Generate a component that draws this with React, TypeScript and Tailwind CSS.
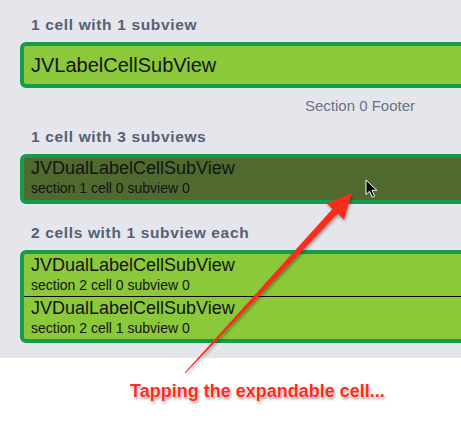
const font = "font-['Liberation_Sans',Arial,sans-serif]";

function SectionHeader({ title, className = "" }: { title: string; className?: string }) {
  return (
    <div className={`pl-[31px] text-[15.5px] leading-[18px] font-bold tracking-[0.65px] text-[#566075] ${className}`}>
      {title}
    </div>
  );
}

function DualRow({ title, sub, className = "" }: { title: string; sub: string; className?: string }) {
  return (
    <div className={`flex h-[42px] flex-col pl-[7px] text-[#141414] ${className}`}>
      <div className="text-[18px] leading-[20px]">{title}</div>
      <div className="mt-[2px] text-[14px] leading-[16px]">{sub}</div>
    </div>
  );
}

function Cursor() {
  return (
    <svg className="absolute left-[365px] top-[179px]" width="14" height="20" viewBox="0 0 14 20">
      <path
        d="M1 1 L1 15.5 L4.6 12.2 L7.2 18.2 L9.6 17.2 L7 11.3 L11.8 11.3 Z"
        fill="#000"
        stroke="#fff"
        strokeWidth="1"
        strokeLinejoin="round"
      />
    </svg>
  );
}

function Arrow() {
  return (
    <svg className="pointer-events-none absolute left-0 top-0" width="461" height="422" viewBox="0 0 461 422">
      <defs>
        <linearGradient id="arrowFill" x1="0" y1="0" x2="1" y2="1">
          <stop offset="0" stopColor="#ff3b26" />
          <stop offset="1" stopColor="#f0200f" />
        </linearGradient>
        <filter id="arrowShadow" x="-10%" y="-10%" width="120%" height="120%">
          <feDropShadow dx="1" dy="2" stdDeviation="1.5" floodColor="#000" floodOpacity="0.35" />
        </filter>
      </defs>
      <polygon
        points="184.6,372.7 185.4,373.3 337.6,213.7 344,219.5 352,193 326.5,203.5 332.4,208.9"
        fill="url(#arrowFill)"
        filter="url(#arrowShadow)"
      />
    </svg>
  );
}

export default function App() {
  return (
    <div className={`relative h-[422px] w-[461px] overflow-hidden bg-white ${font}`}>
      <div className="bg-[#e4e6eb] pt-[16px] pb-[15px]">
        <SectionHeader title="1 cell with 1 subview" />
        <div className="mt-[8px] ml-[20px] flex h-[46px] w-[480px] items-center rounded-[6px] border-4 border-[#169b4b] bg-[#8bc83a] pl-[7px] text-[20px] leading-[24px] text-[#141414]">
          JVLabelCellSubView
        </div>
        <div className="mt-[9px] pr-[46px] text-right text-[15px] leading-[17px] text-[#6b7284]">
          Section 0 Footer
        </div>
        <SectionHeader title="1 cell with 3 subviews" className="mt-[14px]" />
        <div className="mt-[8px] ml-[20px] w-[480px] rounded-[6px] border-4 border-[#169b4b] bg-[#4f692f]">
          <DualRow title="JVDualLabelCellSubView" sub="section 1 cell 0 subview 0" className="text-[#1a1f12]" />
        </div>
        <SectionHeader title="2 cells with 1 subview each" className="mt-[20px]" />
        <div className="mt-[8px] ml-[20px] w-[480px] rounded-[6px] border-4 border-[#169b4b] bg-[#8bc83a]">
          <DualRow title="JVDualLabelCellSubView" sub="section 2 cell 0 subview 0" className="pt-[1px]" />
          <div className="h-px bg-black" />
          <DualRow title="JVDualLabelCellSubView" sub="section 2 cell 1 subview 0" className="pt-[1px]" />
        </div>
      </div>
      <div className="pt-[23px] pl-[130px] text-[18px] leading-[20px] font-bold text-[#ff2a1a] [text-shadow:0_0_1px_#fff,0_0_2px_#fff,1px_2px_3px_rgba(0,0,0,0.45)]">
        Tapping the expandable cell...
      </div>
      <Cursor />
      <Arrow />
    </div>
  );
}
